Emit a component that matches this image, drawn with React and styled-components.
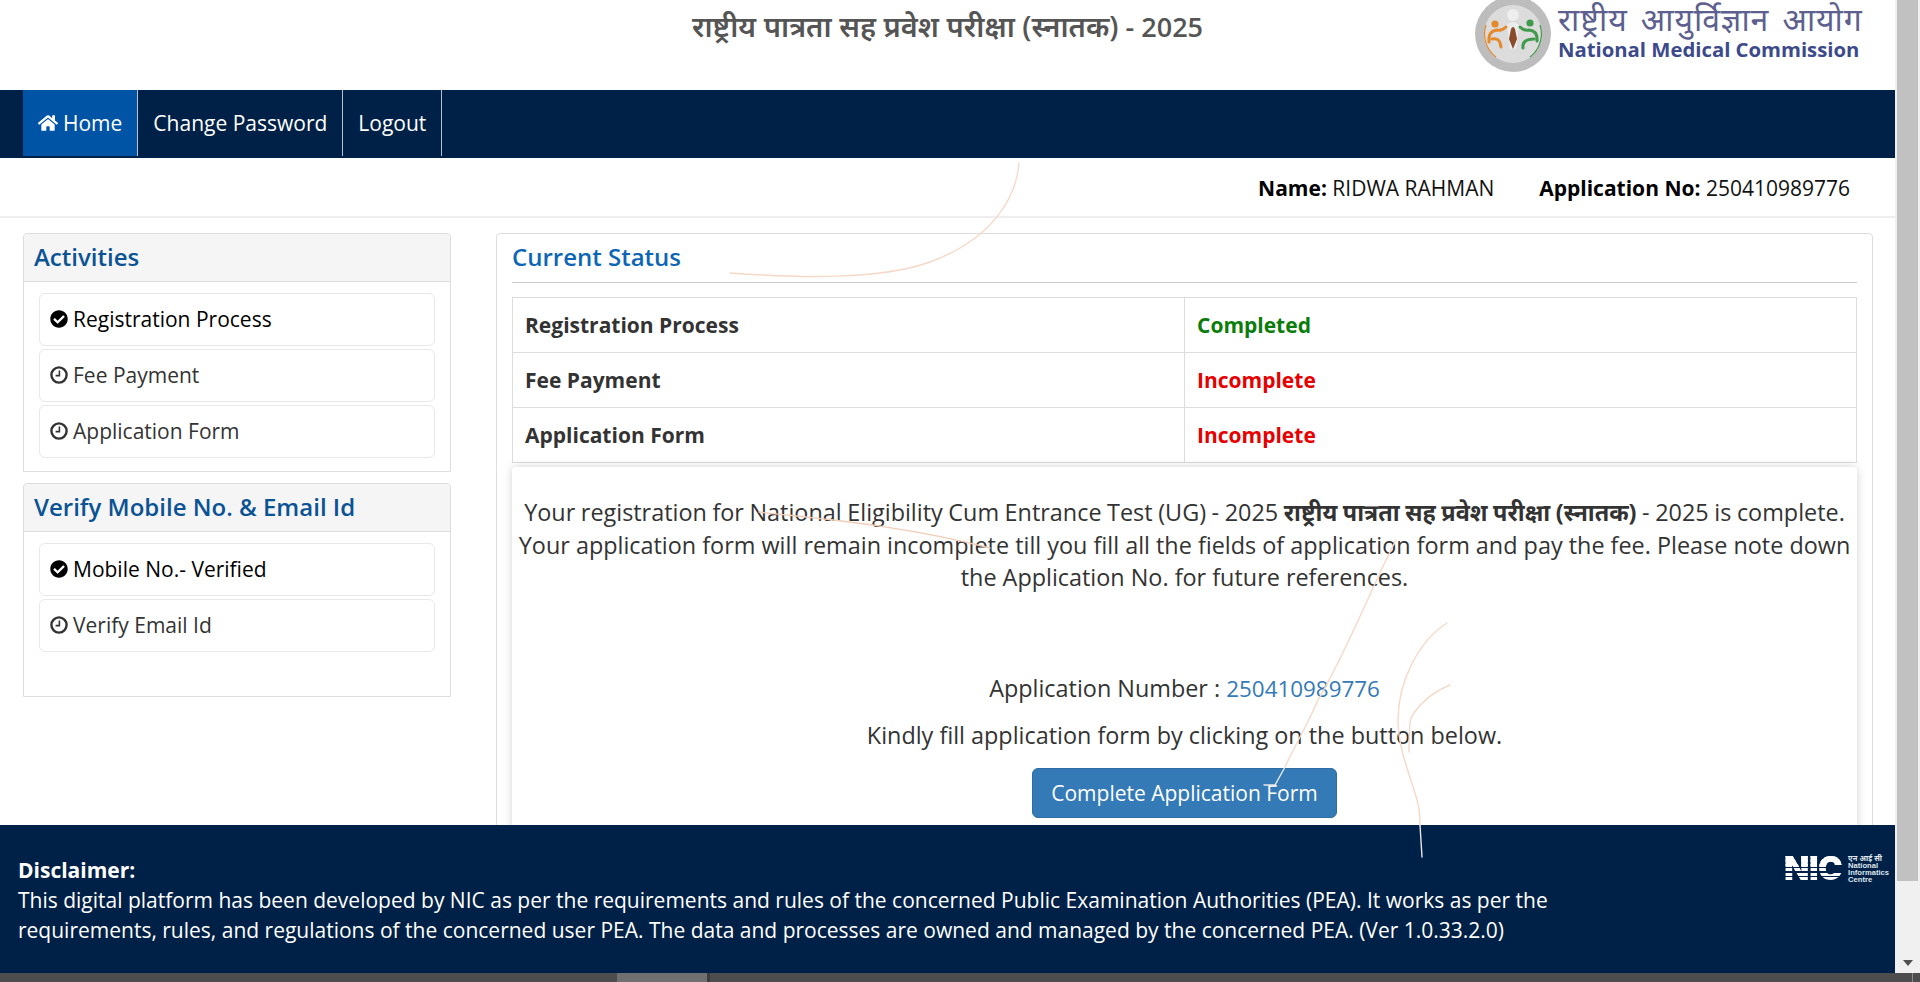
import React from 'react';
import styled, { createGlobalStyle } from 'styled-components';
import { FaHome, FaCheckCircle } from 'react-icons/fa';

const HINDI_STACK = '"Open Sans", "Noto Sans Devanagari", "Lohit Devanagari", "Noto Sans", sans-serif';

const GlobalStyle = createGlobalStyle`
    * { box-sizing: border-box; }
    html, body { margin: 0; height: 100%; overflow: hidden; }
    body {
        font-family: ${HINDI_STACK};
        font-size: 21px;
        color: #333;
        background: #fff;
    }
`;

const Shell = styled.div`
    display: grid;
    grid-template-columns: 1fr 25px;
    grid-template-rows: 1fr 9px;
    height: 100vh;
    overflow: hidden;
`;

const Main = styled.div`
    position: relative;
    display: flex;
    flex-direction: column;
    min-height: 0;
    overflow: hidden;
`;

const Header = styled.header`
    flex: none;
    height: 90px;
    display: flex;
    justify-content: space-between;
    overflow: hidden;
`;

const Title = styled.h1`
    flex: 1;
    margin: 6px 0 0;
    padding-left: 421px;
    text-align: center;
    font-size: 27px;
    line-height: 40px;
    font-weight: 600;
    color: #555;
`;

const TitleHindi = styled.span`
    font-size: 29px;
`;

const Brand = styled.div`
    flex: none;
    width: 421px;
    display: flex;
    gap: 6px;
    margin-top: -5px;
`;

const BrandText = styled.div`
    display: flex;
    flex-direction: column;
    padding-top: 5px;
`;

const BrandHindi = styled.span`
    font-size: 32px;
    line-height: 38px;
    letter-spacing: 0.9px;
    word-spacing: 4px;
    color: #5d5f8f;
    white-space: nowrap;
`;

const BrandEnglish = styled.span`
    font-size: 20.3px;
    line-height: 22px;
    font-weight: 700;
    color: #3c4a8c;
    white-space: nowrap;
`;

const Nav = styled.nav`
    flex: none;
    height: 68px;
    padding: 0 0 2px 23px;
    display: flex;
    background: #002147;
`;

const NavLink = styled.a`
    display: flex;
    align-items: center;
    gap: 5px;
    padding: 0 15px;
    font-size: 21px;
    color: #fff;
    border-right: 1px solid #b9c3cf;
    background: ${(p) => (p.$active ? '#0054a6' : 'transparent')};
`;

const InfoBar = styled.div`
    flex: none;
    height: 60px;
    padding: 2px 45px 0 0;
    display: flex;
    justify-content: flex-end;
    align-items: center;
    gap: 45px;
    font-size: 21px;
    color: #111;
    border-bottom: 2px solid #eee;
`;

const InfoItem = styled.span`
    b { font-weight: 700; color: #000; }
`;

const Content = styled.div`
    flex: 1;
    min-height: 0;
    overflow: hidden;
    padding: 15px 22px 0 23px;
    display: grid;
    grid-template-columns: 428px 1fr;
    column-gap: 45px;
    align-items: start;
`;

const Sidebar = styled.aside`
    display: flex;
    flex-direction: column;
    gap: 11px;
`;

const SidePanel = styled.section`
    border: 1px solid #ddd;
    border-radius: 4px 4px 0 0;
    padding-bottom: ${(p) => p.$bottom}px;
`;

const SideHead = styled.h2`
    margin: 0;
    height: 48px;
    padding: 0 10px 2px;
    display: flex;
    align-items: center;
    font-size: 24px;
    font-weight: 600;
    color: #0b5394;
    background: #f5f5f5;
    border-bottom: 1px solid #ddd;
    border-radius: 4px 4px 0 0;
`;

const SideList = styled.ul`
    list-style: none;
    margin: 0;
    padding: 11px 15px 0;
    display: flex;
    flex-direction: column;
    gap: 3px;
`;

const SideItem = styled.li`
    height: 53px;
    padding: 0 10px 1px;
    display: flex;
    align-items: center;
    gap: 5px;
    font-size: 21px;
    color: ${(p) => (p.$done ? '#000' : '#333')};
    border: 1px solid #e8e8e8;
    border-radius: 6px;
`;

const StatusPanel = styled.section`
    border: 1px solid #ddd;
    border-radius: 4px;
    padding: 0 15px 200px;
`;

const StatusHead = styled.h2`
    margin: 0;
    height: 49px;
    padding: 0 0 3px;
    display: flex;
    align-items: center;
    font-size: 24px;
    font-weight: 600;
    color: #0d66b5;
    border-bottom: 1px solid #ccc;
`;

const StatusTable = styled.table`
    width: 100%;
    margin-top: 14px;
    border-collapse: collapse;
    table-layout: fixed;
    font-size: 21px;

    td {
        height: 55px;
        padding: 0 12px;
        border: 1px solid #ddd;
    }
`;

const RowLabel = styled.td`
    font-weight: 700;
    color: #333;
`;

const RowValue = styled.td`
    font-weight: 700;
    color: ${(p) => (p.$done ? '#0a7d0a' : '#e60000')};
`;

const MessageCard = styled.div`
    margin-top: 4px;
    padding: 29px 0 40px;
    text-align: center;
    font-size: 23.4px;
    line-height: 32.5px;
    color: #333;
    border-radius: 4px;
    box-shadow: 0 0 10px rgba(0, 0, 0, 0.18);
`;

const Message = styled.p`
    margin: 0 0 78px;
`;

const FirstLine = styled.span`
    word-spacing: -0.5px;
`;

const AppNumber = styled.p`
    margin: 0 0 14px;

    a { color: #337ab7; font-size: 22.4px; }
`;

const Hint = styled.p`
    margin: 0 0 16px;
`;

const PrimaryButton = styled.button`
    width: 305px;
    height: 50px;
    font-family: inherit;
    font-size: 21px;
    color: #fff;
    background: #337ab7;
    border: 1px solid #2e6da4;
    border-radius: 6px;
`;

const Footer = styled.footer`
    position: relative;
    flex: none;
    height: 148px;
    padding: 30px 6px 0 18px;
    display: flex;
    justify-content: space-between;
    align-items: flex-start;
    background: #002147;
    color: #fff;
    font-size: 21px;
    line-height: 30px;
`;

const Disclaimer = styled.div`
    max-width: 1560px;

    b { display: block; font-weight: 700; }
`;

const NicLogo = styled.div`
    flex: none;
    display: flex;
    gap: 5px;
    color: #dfe5ec;
`;

const NicMark = styled.span`
    width: 59px;
    height: 27px;
    font-family: "Inter", "Liberation Sans", sans-serif;
    font-weight: 900;
    font-size: 33px;
    line-height: 27px;
    letter-spacing: -0.5px;
    color: transparent;
    background: linear-gradient(#fff 0 11px, transparent 11px),
        repeating-linear-gradient(#fff 0 3px, #002147 3px 4.5px);
    -webkit-background-clip: text;
    background-clip: text;
`;

const NicText = styled.span`
    display: flex;
    flex-direction: column;
    font-size: 7.6px;
    line-height: 7px;
    font-weight: 700;
    font-family: "Liberation Sans", ${HINDI_STACK};
`;

const ScrollTrack = styled.div`
    display: flex;
    flex-direction: column;
    justify-content: space-between;
    align-items: center;
    padding-bottom: 7px;
    background: #f0f0f0;
`;

const ScrollThumb = styled.div`
    width: 21px;
    height: 881px;
    background: #c1c1c1;
`;

const ScrollArrow = styled.div`
    width: 0;
    height: 0;
    border-left: 5.5px solid transparent;
    border-right: 5.5px solid transparent;
    border-top: 6px solid #505050;
`;

const BottomBar = styled.div`
    grid-column: 1 / -1;
    display: flex;
    background: #4d4d4d;
`;

const BarSegment = styled.div`
    flex: none;
    width: ${(p) => p.$w}px;
    background: ${(p) => p.$bg};
`;

const Scribbles = styled.svg`
    position: absolute;
    top: 0;
    left: 0;
    width: 1895px;
    height: 973px;
    pointer-events: none;
    fill: none;
    stroke-width: 1.4;
    stroke-linecap: round;
`;

const ClockIcon = () => (
    <svg width="18" height="18" viewBox="0 0 18 18" fill="none" stroke="currentColor">
        <circle cx="9" cy="9" r="7.6" strokeWidth="2.4" />
        <path d="M9.4 4.6V9.6H5.6" strokeWidth="1.6" />
    </svg>
);

const HomeIcon = styled(FaHome)`
    font-size: 20px;
`;

const DoneIcon = styled(FaCheckCircle)`
    flex: none;
    font-size: 18px;
    color: #000;
`;

const NmcLogo = () => (
    <svg width="78" height="78" viewBox="0 0 78 78">
        <circle cx="39" cy="39" r="38" fill="#bdbdbd" />
        <circle cx="39" cy="39" r="29" fill="#dcdcdc" />
        <path d="M12 30 A29 29 0 0 0 22 62" fill="none" stroke="#e48a2c" strokeWidth="1.2" />
        <path d="M66 30 A29 29 0 0 1 56 62" fill="none" stroke="#3f9a4c" strokeWidth="1.2" />
        <circle cx="39" cy="20" r="6" fill="#eeeeee" />
        <path d="M33 30 Q39 24 45 30 L42 54 H36Z" fill="#ececec" />
        <path d="M37 34 Q39 30 41 34 L43 44 L39 54 L35 44Z" fill="#8a4b2d" />
        <circle cx="21" cy="29" r="3.6" fill="#e48a2c" />
        <path d="M15 47 Q14 36 23 35 Q28 36 32 32 M18 44 Q26 42 27 52" fill="none" stroke="#e48a2c" strokeWidth="3" strokeLinecap="round" />
        <circle cx="56" cy="28" r="3.6" fill="#3f9a4c" />
        <path d="M63 46 Q64 36 55 35 Q50 36 46 32 M60 44 Q48 44 49 53" fill="none" stroke="#3f9a4c" strokeWidth="3" strokeLinecap="round" />
    </svg>
);

const activities = [
    { label: 'Registration Process', done: true },
    { label: 'Fee Payment', done: false },
    { label: 'Application Form', done: false },
];

const verifications = [
    { label: 'Mobile No.- Verified', done: true },
    { label: 'Verify Email Id', done: false },
];

const statuses = [
    { label: 'Registration Process', value: 'Completed', done: true },
    { label: 'Fee Payment', value: 'Incomplete', done: false },
    { label: 'Application Form', value: 'Incomplete', done: false },
];

const SideRows = ({ rows }) => (
    <SideList>
        {rows.map((row) => (
            <SideItem key={row.label} $done={row.done}>
                {row.done ? <DoneIcon /> : <ClockIcon />}
                {row.label}
            </SideItem>
        ))}
    </SideList>
);

const App = () => (
    <Shell>
        <GlobalStyle />
        <Main>
            <Header>
                <Title><TitleHindi>राष्ट्रीय पात्रता सह प्रवेश परीक्षा (स्नातक)</TitleHindi> - 2025</Title>
                <Brand>
                    <NmcLogo />
                    <BrandText>
                        <BrandHindi>राष्ट्रीय आयुर्विज्ञान आयोग</BrandHindi>
                        <BrandEnglish>National Medical Commission</BrandEnglish>
                    </BrandText>
                </Brand>
            </Header>
            <Nav>
                <NavLink $active><HomeIcon />Home</NavLink>
                <NavLink>Change Password</NavLink>
                <NavLink>Logout</NavLink>
            </Nav>
            <InfoBar>
                <InfoItem><b>Name:</b> RIDWA RAHMAN</InfoItem>
                <InfoItem><b>Application No:</b> 250410989776</InfoItem>
            </InfoBar>
            <Content>
                <Sidebar>
                    <SidePanel $bottom={13}>
                        <SideHead>Activities</SideHead>
                        <SideRows rows={activities} />
                    </SidePanel>
                    <SidePanel $bottom={44}>
                        <SideHead>Verify Mobile No. &amp; Email Id</SideHead>
                        <SideRows rows={verifications} />
                    </SidePanel>
                </Sidebar>
                <StatusPanel>
                    <StatusHead>Current Status</StatusHead>
                    <StatusTable>
                        <tbody>
                            {statuses.map((row) => (
                                <tr key={row.label}>
                                    <RowLabel>{row.label}</RowLabel>
                                    <RowValue $done={row.done}>{row.value}</RowValue>
                                </tr>
                            ))}
                        </tbody>
                    </StatusTable>
                    <MessageCard>
                        <Message>
                            <FirstLine>Your registration for National Eligibility Cum Entrance Test (UG) - 2025 <b>राष्ट्रीय पात्रता सह प्रवेश परीक्षा (स्नातक)</b> - 2025 is complete.</FirstLine>
                            <br />
                            Your application form will remain incomplete till you fill all the fields of application form and pay the fee. Please note down
                            <br />
                            the Application No. for future references.
                        </Message>
                        <AppNumber>Application Number : <a>250410989776</a></AppNumber>
                        <Hint>Kindly fill application form by clicking on the button below.</Hint>
                        <PrimaryButton>Complete Application Form</PrimaryButton>
                    </MessageCard>
                </StatusPanel>
            </Content>
            <Footer>
                <Disclaimer>
                    <b>Disclaimer:</b>
                    This digital platform has been developed by NIC as per the requirements and rules of the concerned Public Examination Authorities (PEA). It works as per the requirements, rules, and regulations of the concerned user PEA. The data and processes are owned and managed by the concerned PEA. (Ver 1.0.33.2.0)
                </Disclaimer>
                <NicLogo>
                    <NicMark>NIC</NicMark>
                    <NicText>
                        <span>एन आई सी</span>
                        <span>National</span>
                        <span>Informatics</span>
                        <span>Centre</span>
                    </NicText>
                </NicLogo>
            </Footer>
            <Scribbles viewBox="0 0 1895 973">
                <path stroke="#f5d9c8" d="M1019 163C1016 200 990 240 930 262C880 280 800 278 730 273" />
                <path stroke="#f0cdb8" d="M759 512C830 520 900 525 990 548" />
                <path stroke="#f5d9c8" d="M1396 540C1375 580 1345 655 1318 700C1305 730 1295 745 1285 767" />
                <path stroke="#e8e8e8" d="M1285 767L1275 785L1264 785" />
                <path stroke="#f5d9c8" d="M1447 623C1420 640 1398 680 1398 720C1398 750 1412 780 1417 800C1420 810 1420 820 1420 825" />
                <path stroke="#e8e8e8" d="M1420 825L1422 857" />
                <path stroke="#f5d9c8" d="M1450 685C1425 695 1410 715 1410 723C1409 735 1409 745 1409 752" />
            </Scribbles>
        </Main>
        <ScrollTrack>
            <ScrollThumb />
            <ScrollArrow />
        </ScrollTrack>
        <BottomBar>
            <BarSegment $w={617} $bg="#4d4d4d" />
            <BarSegment $w={90} $bg="#707070" />
            <BarSegment $w={3} $bg="#3d3d3d" />
            <BarSegment $w={1202} $bg="#4d4d4d" />
            <BarSegment $w={1} $bg="#8a8a8a" />
        </BottomBar>
    </Shell>
);

export default App;
